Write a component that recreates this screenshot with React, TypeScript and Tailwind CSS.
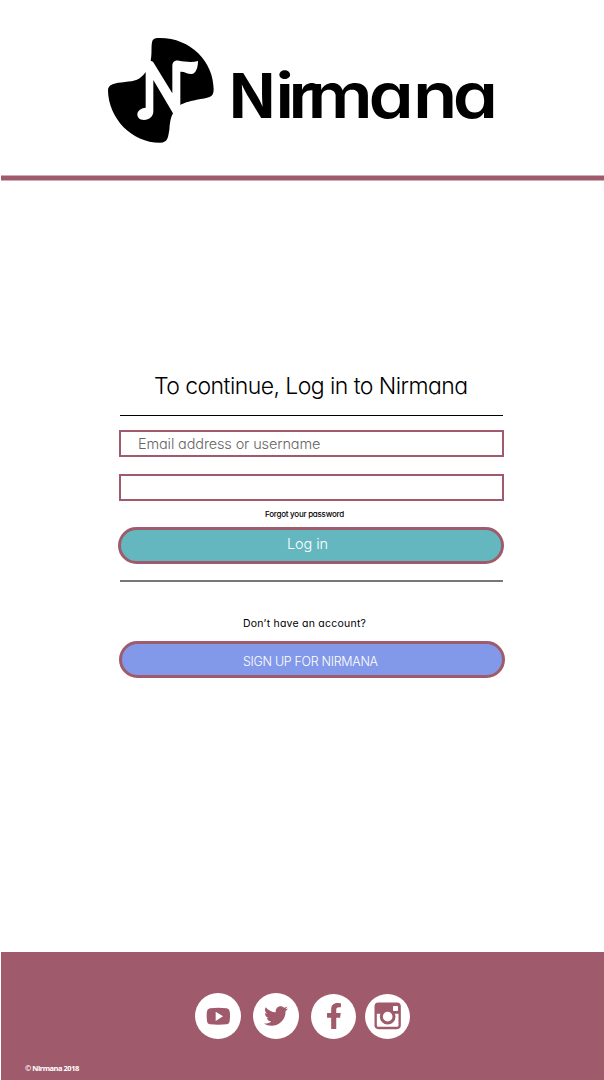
import type { ReactNode } from "react";
import { FaFacebookF, FaTwitter } from "react-icons/fa";

function Logo() {
  return (
    <svg className="h-[120px] w-[125px] shrink-0" viewBox="0 0 375 360" aria-hidden="true">
      <path d="M180 24C272 24 341 95 341 178C341 205 325 203 290 209C265 214 250 219 241 225V125C255 124 262 133 276 132C288 130 294 112 294 93C275 98 255 95 237 92C222 90 217 97 217 110V190L159 95L152 92C157 70 152 42 158 31C162 24 170 24 180 24Z" />
      <path d="M137 126C120 150 105 153 75 156C45 159 23 162 24 182C26 265 95 338 180 338C205 338 204 320 208 300C209 280 212 262 219 250L160 150V244C160 260 148 270 132 270C118 270 112 262 112 253C112 242 125 233 137 233Z" />
    </svg>
  );
}

function Wordmark() {
  return (
    <svg className="h-[120px] w-[280px] shrink-0" viewBox="225 30 280 120">
      <text
        y="118"
        transform="scale(1.16 1)"
        className="fill-black font-['Inter',sans-serif] text-[62.5px] font-semibold [font-feature-settings:'cv11']"
      >
        <tspan x="197.6" textLength="39.6" lengthAdjust="spacingAndGlyphs" className="font-bold">N</tspan>
        <tspan x="237.2 248.6 265 317.6 356 390.4">irmana</tspan>
      </text>
    </svg>
  );
}

function Social({ label, className, children }: { label: string; className: string; children: ReactNode }) {
  return (
    <a
      href="#"
      aria-label={label}
      className={`flex items-center justify-center rounded-full bg-white text-[#9f5b6b] ${className}`}
    >
      {children}
    </a>
  );
}

export default function App() {
  return (
    <div className="flex h-[1080px] w-[604px] flex-col overflow-hidden bg-white font-['Inter',sans-serif] text-black [font-feature-settings:'cv11']">
      <header className="flex h-[175px] shrink-0 pt-[30px] pl-[100px]">
        <Logo />
        <Wordmark />
      </header>
      <div className="ml-px h-[6px] shrink-0 border-y border-[#cfadb5] bg-[#9f5b6b]" />

      <main className="flex h-[771px] shrink-0 flex-col pt-[189px] pr-[100px] pl-[118px]">
        <h1 className="ml-[36px] h-[32px] text-[23px] leading-[32px] font-light tracking-[-0.56px] whitespace-nowrap">
          To continue, Log in to Nirmana
        </h1>
        <div className="mt-[13px] ml-[2px] h-px w-[383px] shrink-0 bg-black" />
        <input
          placeholder="Email address or username"
          className="mt-[14px] ml-px h-[27px] w-[385px] shrink-0 border-2 border-[#9f5b6b] pl-[17px] text-[14.5px] font-light tracking-[-0.13px] outline-none placeholder:text-[#666]"
        />
        <input
          type="password"
          aria-label="Password"
          className="mt-[17px] ml-px h-[27px] w-[385px] shrink-0 border-2 border-[#9f5b6b] outline-none"
        />
        <a
          href="#"
          className="mt-[7px] ml-[147px] h-[12px] text-[8px] leading-[12px] font-medium tracking-[-0.25px] whitespace-nowrap"
        >
          Forgot your password
        </a>
        <button className="mt-[7px] flex h-[37px] w-[386px] shrink-0 rounded-full border-3 border-[#9f5b6b] bg-[#65b7bf] pt-[4px] pl-[166px] text-[14.5px] leading-[20px] font-light tracking-[-0.1px] text-white">
          Log in
        </button>
        <div className="mt-[16px] ml-[2px] h-[2px] w-[383px] shrink-0 bg-[#777]" />
        <p className="mt-[34px] ml-[125px] h-[16px] text-[10.5px] leading-[16px] tracking-[0.23px] whitespace-nowrap">
          Don’t have an account?
        </p>
        <button className="mt-[9px] ml-px flex h-[37px] w-[386px] shrink-0 rounded-full border-3 border-[#9f5b6b] bg-[#8298e9] pt-[8px] pl-[121px] text-[12.5px] leading-[20px] font-light tracking-[-0.31px] text-white">
          SIGN UP FOR NIRMANA
        </button>
      </main>

      <footer className="ml-px flex h-[128px] shrink-0 flex-col bg-[#9f5b6b]">
        <nav className="mt-[41px] ml-[194px] flex h-[46px] items-center">
          <Social label="YouTube" className="size-[46px]">
            <svg className="size-[46px]" viewBox="0 0 138 138" fill="currentColor">
              <path
                fillRule="evenodd"
                d="M45 46Q70 43 95 46Q103 47 104 55Q106 69 104 84Q103 93 95 94Q70 96 45 94Q37 93 36 84Q34 69 36 55Q37 47 45 46ZM62 56V84L84 70Z"
              />
            </svg>
          </Social>
          <Social label="Twitter" className="ml-[12px] size-[46px]">
            <FaTwitter className="size-[24px]" />
          </Social>
          <Social label="Facebook" className="ml-[12px] size-[45px]">
            <FaFacebookF className="size-[26px]" />
          </Social>
          <Social label="Instagram" className="ml-[9px] size-[45px]">
            <svg className="size-[45px]" viewBox="0 0 135 135" fill="none" stroke="currentColor">
              <rect x="32" y="29" width="72" height="73" rx="8" strokeWidth="7" />
              <path d="M32 29H104V59H86A24 24 0 0 0 50 59H32Z" fill="currentColor" stroke="none" />
              <circle cx="68" cy="68" r="19" fill="#fff" strokeWidth="9" />
              <rect x="84" y="36" width="15" height="15" rx="2" fill="#fff" stroke="none" />
            </svg>
          </Social>
        </nav>
        <p className="mt-[23px] ml-[24px] font-['Noto_Sans',sans-serif] text-[7.5px] leading-[12px] font-bold tracking-[-0.45px] text-white">
          © Nirmana 2018
        </p>
      </footer>
    </div>
  );
}
